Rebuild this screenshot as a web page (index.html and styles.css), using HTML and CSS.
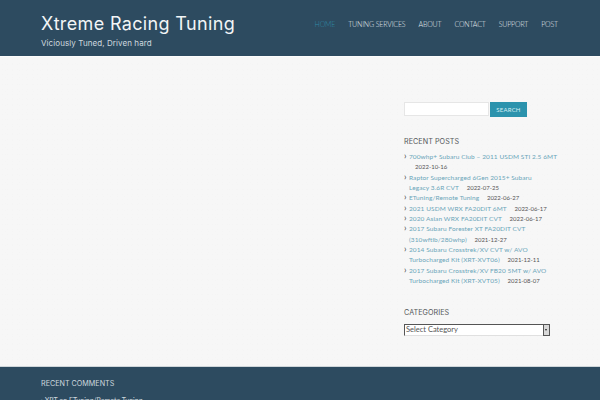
FILE: index.html
```html
<!DOCTYPE html>
<html lang="en">
<head>
<meta charset="utf-8">
<title>Xtreme Racing Tuning</title>
<link rel="stylesheet" href="styles.css">
</head>
<body>
<header class="site-header">
  <div class="brand">
    <h1 class="site-title">Xtreme Racing Tuning</h1>
    <p class="tagline">Viciously Tuned, Driven hard</p>
  </div>
  <nav class="nav">
    <a class="nav-link current" href="#">HOME</a>
    <a class="nav-link" href="#">TUNING SERVICES</a>
    <a class="nav-link" href="#">ABOUT</a>
    <a class="nav-link" href="#">CONTACT</a>
    <a class="nav-link" href="#">SUPPORT</a>
    <a class="nav-link" href="#">POST</a>
  </nav>
</header>
<main class="main">
  <aside class="sidebar">
    <form class="search">
      <input class="search-input" type="text" aria-label="Search">
      <button class="search-btn" type="button">SEARCH</button>
    </form>
    <section class="widget posts">
      <h2 class="widget-title">RECENT POSTS</h2>
      <ul class="post-list">
        <li><a href="#">700whp+ Subaru Club – 2011 USDM STI 2.5 6MT</a> <span class="date">2022-10-16</span></li>
        <li><a href="#">Raptor Supercharged 6Gen 2015+ Subaru<br>Legacy 3.6R CVT</a> <span class="date">2022-07-25</span></li>
        <li><a href="#">ETuning/Remote Tuning</a> <span class="date">2022-06-27</span></li>
        <li><a href="#">2021 USDM WRX FA20DIT 6MT</a> <span class="date">2022-06-17</span></li>
        <li><a href="#">2020 Asian WRX FA20DIT CVT</a> <span class="date">2022-06-17</span></li>
        <li><a href="#">2017 Subaru Forester XT FA20DIT CVT (310wftlb/280whp)</a> <span class="date">2021-12-27</span></li>
        <li><a href="#">2014 Subaru Crosstrek/XV CVT w/ AVO Turbocharged Kit (XRT-XVT06)</a> <span class="date">2021-12-11</span></li>
        <li><a href="#">2017 Subaru Crosstrek/XV FB20 5MT w/ AVO Turbocharged Kit (XRT-XVT05)</a> <span class="date">2021-08-07</span></li>
      </ul>
    </section>
    <section class="widget categories">
      <h2 class="widget-title">CATEGORIES</h2>
      <div class="select-wrap">
        <select class="category-select" aria-label="Categories"><option>Select Category</option></select>
        <span class="select-arrow"></span>
      </div>
    </section>
  </aside>
</main>
<footer class="site-footer">
  <h2 class="footer-title">RECENT COMMENTS</h2>
  <p class="comment">XRT on <a href="#">ETuning/Remote Tuning</a></p>
</footer>
</body>
</html>
```

FILE: styles.css
```css
html, body { margin: 0; padding: 0; }
body {
  width: 600px;
  height: 400px;
  overflow: hidden;
  display: flex;
  flex-direction: column;
  font-family: "Lato", "Open Sans", sans-serif;
  background: #f6f6f6;
  color: #333;
}
.site-header {
  height: 56px;
  flex: none;
  box-sizing: border-box;
  background: #2d4b60;
  padding: 13px 42px 0 41px;
  display: flex;
  justify-content: space-between;
}
.site-title {
  margin: 0;
  font: 400 18px/22px "Inter", sans-serif;
  letter-spacing: .35px;
  color: #f2f5f6;
}
.tagline {
  margin: 3px 0 0;
  font: 400 8px/11px "Inter", sans-serif;
  letter-spacing: .08px;
  color: #cfd9df;
}
.nav {
  display: flex;
  gap: 13px;
  padding-top: 5px;
}
.nav-link {
  font: 300 7px/12px "Lato", sans-serif;
  letter-spacing: -.15px;
  color: #e2e8ec;
  text-decoration: none;
}
.nav-link.current { color: #2f8aa6; }
.main {
  flex: 1;
  padding: 45px 40px 0 404px;
  background-color: #f7f7f7;
  background-image:
    radial-gradient(#f4f4f4 .7px, transparent .8px),
    radial-gradient(#f5f5f5 .7px, transparent .8px);
  background-size: 5px 5px, 7px 7px;
  background-position: 0 0, 2px 3px;
  border-top: 1px solid #fcfcfc;
}
.sidebar { width: 156px; }
.search { display: flex; gap: 1px; height: 15px; }
.search-input {
  width: 85px;
  box-sizing: border-box;
  height: 14px;
  margin: 0;
  padding: 0;
  border: 1px solid #e6e6e6;
  background: #fff;
}
.search-btn {
  width: 37px;
  height: 15px;
  padding: 0;
  border: 0;
  background: #2c93ad;
  color: #d7eef3;
  font: 400 6px/15px "Lato", sans-serif;
  letter-spacing: .2px;
}
.widget-title {
  margin: 0;
  font: 400 7.2px/12px "Inter", sans-serif;
  letter-spacing: .05px;
  color: #55585b;
}
.posts { margin-top: 19px; }
.post-list {
  list-style: none;
  margin: 4px 0 0;
  padding: 0;
  font: 400 6.5px/10.33px "Lato", sans-serif;
}
.post-list li {
  position: relative;
  padding-left: 5px;
}
.post-list li::before {
  content: "›";
  position: absolute;
  left: 0;
  top: -1px;
  color: #444;
  font-size: 9px;
}
.post-list a { color: #6aa5b9; text-decoration: none; letter-spacing: .1px; }
.date { font-size: 6px; color: #555; margin-left: 6px; }
.categories { margin-top: 21px; }
.select-wrap {
  position: relative;
  width: 146px;
  margin-top: 5px;
}
.category-select {
  appearance: none;
  display: block;
  width: 100%;
  height: 12px;
  box-sizing: border-box;
  margin: 0;
  padding: 0 0 0 1px;
  font: 400 7.5px/10px "Lato", sans-serif;
  color: #555;
  background: #fff;
  border: 1px solid #e0e0e0;
  border-top-color: #555;
  border-left-color: #555;
  border-radius: 0;
}
.select-arrow {
  position: absolute;
  right: 0;
  top: 0;
  width: 7px;
  height: 12px;
  box-sizing: border-box;
  background: #d8d8d8;
  border: 1px solid #555;
}
.select-arrow::after {
  content: "";
  position: absolute;
  left: 1px;
  top: 4px;
  border-left: 1.5px solid transparent;
  border-right: 1.5px solid transparent;
  border-top: 2px solid #222;
}
.site-footer {
  height: 34px;
  flex: none;
  box-sizing: border-box;
  background: #2d4b60;
  padding: 11px 41px 0;
  border-top: 1px solid #cfd6da;
  overflow: hidden;
}
.footer-title {
  margin: 0;
  font: 400 7.2px/12px "Inter", sans-serif;
  color: #cdd8de;
}
.comment {
  margin: 5px 0 0;
  font: 400 7px/10px "Lato", sans-serif;
  color: #cdd8de;
}
.comment::before { content: "› "; }
.comment a { color: #cdd8de; text-decoration: none; }
```
